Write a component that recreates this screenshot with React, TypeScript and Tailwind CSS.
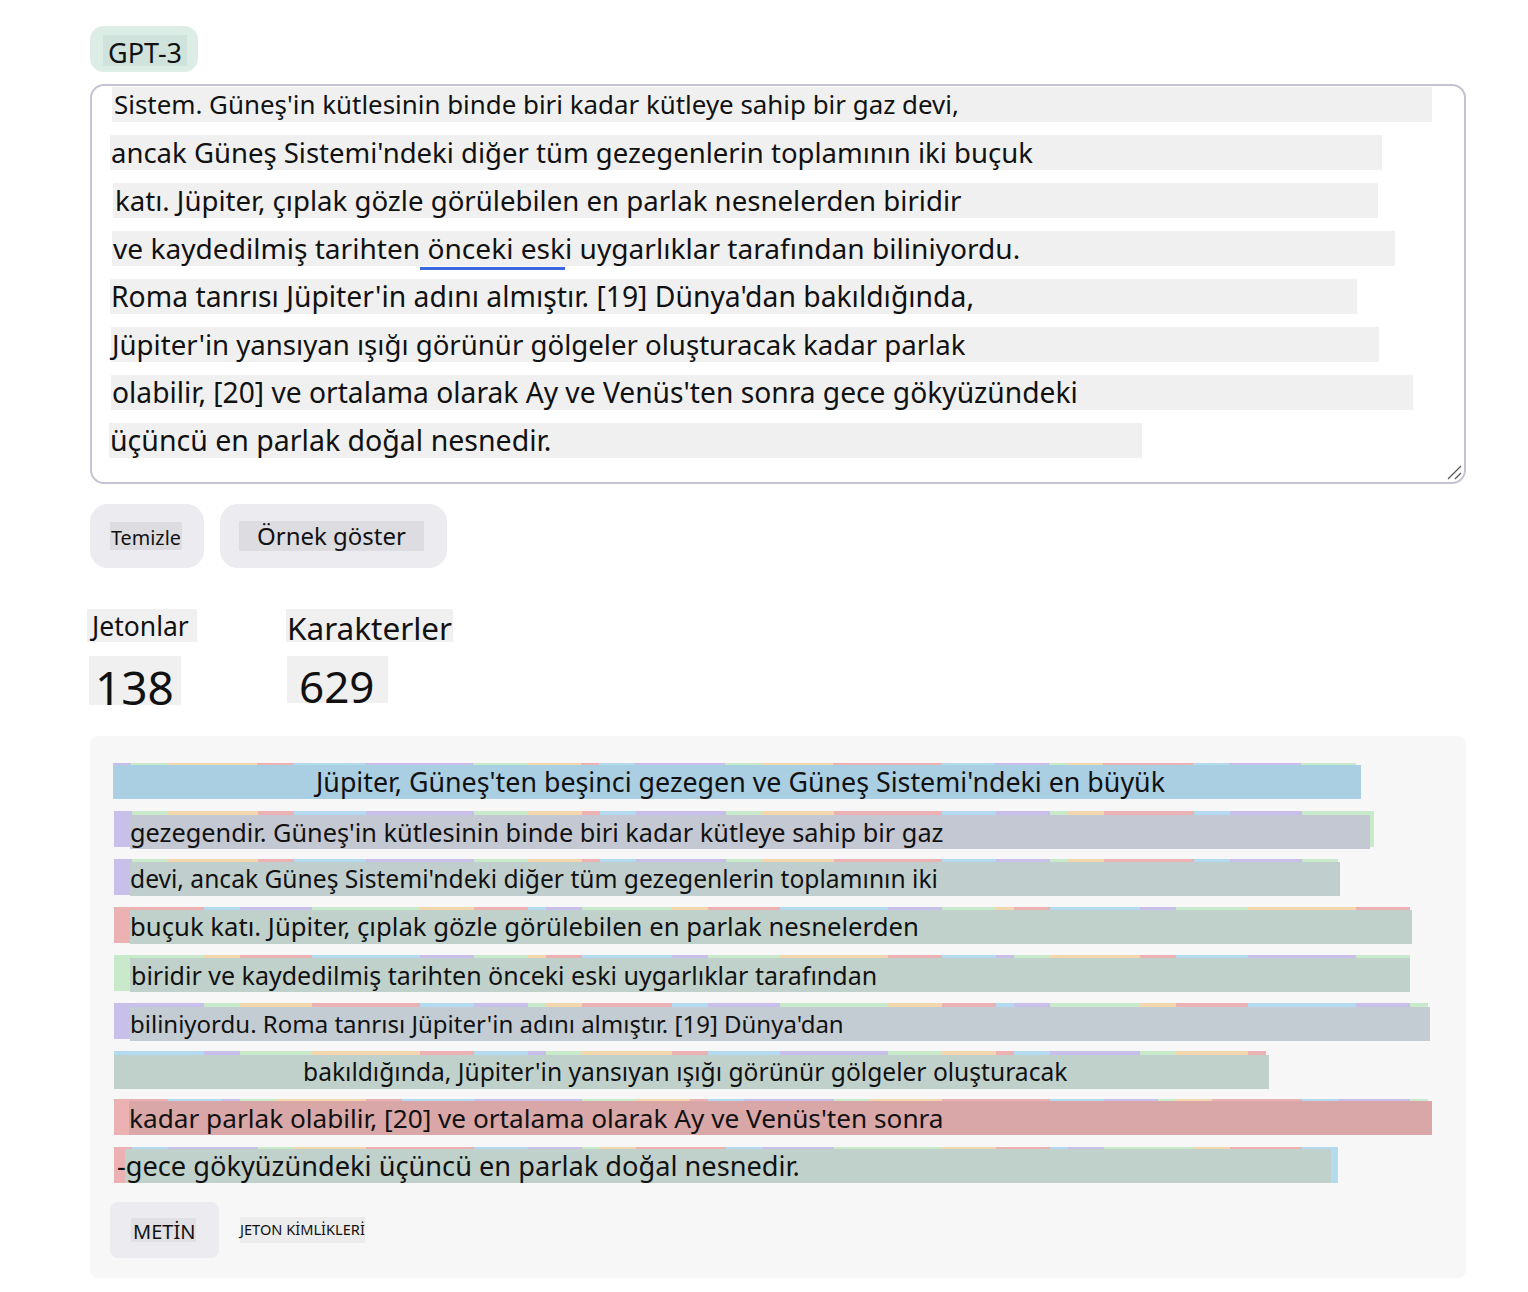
import React from "react";

const COLORS = ["#c8c0ea", "#c8eacb", "#f1d6ae", "#ecb2b3", "#b3daee"];

function makeSegs(start: number, end: number, first: number, seed: number) {
  const out: { w: number; c: string }[] = [];
  let x = start;
  let i = first;
  let s = seed;
  const choices = [18, 36, 54, 54, 72, 108, 90, 36];
  while (x < end) {
    s = (s * 9301 + 49297) % 233280;
    const w = choices[s % choices.length];
    const ww = Math.min(w, end - x);
    out.push({ w: ww, c: COLORS[i % 5] });
    x += ww;
    i++;
  }
  return out;
}

type TokLine = {
  segStart: number;
  segEnd: number;
  first: number;
  seed: number;
  ovLeft: number;
  ovRight: number;
  ovTop: number;
  bg: string;
  text: string;
  textLeft: number;
  size: number;
};

const PANEL_X = 90;

const tokLines: TokLine[] = [
  { segStart: 113, segEnd: 1356, first: 0, seed: 3, ovLeft: 113, ovRight: 1361, ovTop: 2, bg: "#aacee2", text: "Jüpiter, Güneş'ten beşinci gezegen ve Güneş Sistemi'ndeki en büyük", textLeft: 316, size: 26.8 },
  { segStart: 114, segEnd: 1374, first: 0, seed: 11, ovLeft: 130, ovRight: 1370, ovTop: 4, bg: "#c4c8d2", text: "gezegendir. Güneş'in kütlesinin binde biri kadar kütleye sahip bir gaz", textLeft: 130, size: 25.3 },
  { segStart: 114, segEnd: 1338, first: 0, seed: 27, ovLeft: 130, ovRight: 1340, ovTop: 3, bg: "#c0cfcd", text: "devi, ancak Güneş Sistemi'ndeki diğer tüm gezegenlerin toplamının iki", textLeft: 130, size: 24.6 },
  { segStart: 114, segEnd: 1410, first: 3, seed: 41, ovLeft: 130, ovRight: 1412, ovTop: 3, bg: "#c0d1cc", text: "buçuk katı. Jüpiter, çıplak gözle görülebilen en parlak nesnelerden", textLeft: 130, size: 25.7 },
  { segStart: 114, segEnd: 1410, first: 1, seed: 57, ovLeft: 130, ovRight: 1410, ovTop: 3, bg: "#c0d1cc", text: "biridir ve kaydedilmiş tarihten önceki eski uygarlıklar tarafından", textLeft: 131, size: 25 },
  { segStart: 114, segEnd: 1428, first: 0, seed: 73, ovLeft: 130, ovRight: 1430, ovTop: 4, bg: "#c2ccd2", text: "biliniyordu. Roma tanrısı Jüpiter'in adını almıştır. [19] Dünya'dan", textLeft: 130, size: 24 },
  { segStart: 114, segEnd: 1266, first: 4, seed: 89, ovLeft: 114, ovRight: 1269, ovTop: 4, bg: "#c0d1cc", text: "bakıldığında, Jüpiter'in yansıyan ışığı görünür gölgeler oluşturacak", textLeft: 303, size: 24.6 },
  { segStart: 114, segEnd: 1428, first: 3, seed: 101, ovLeft: 129, ovRight: 1432, ovTop: 2, bg: "#d9a7a7", text: "kadar parlak olabilir, [20] ve ortalama olarak Ay ve Venüs'ten sonra", textLeft: 129, size: 26.2 },
  { segStart: 114, segEnd: 1338, first: 3, seed: 131, ovLeft: 125, ovRight: 1331, ovTop: 2, bg: "#c0d1cc", text: "-gece gökyüzündeki üçüncü en parlak doğal nesnedir.", textLeft: 117, size: 27.2 },
];

const taLines = [
  { ml: 112, right: 1432, textPad: 2, size: 25.9, text: "Sistem. Güneş'in kütlesinin binde biri kadar kütleye sahip bir gaz devi," },
  { ml: 110, right: 1382, textPad: 1, size: 27.5, text: "ancak Güneş Sistemi'ndeki diğer tüm gezegenlerin toplamının iki buçuk" },
  { ml: 113, right: 1378, textPad: 2, size: 27.6, text: "katı. Jüpiter, çıplak gözle görülebilen en parlak nesnelerden biridir" },
  { ml: 112, right: 1395, textPad: 1, size: 28.1, text: "" },
  { ml: 110, right: 1357, textPad: 1, size: 28.3, text: "Roma tanrısı Jüpiter'in adını almıştır. [19] Dünya'dan bakıldığında," },
  { ml: 111, right: 1379, textPad: 1, size: 27.6, text: "Jüpiter'in yansıyan ışığı görünür gölgeler oluşturacak kadar parlak" },
  { ml: 111, right: 1413, textPad: 1, size: 28.2, text: "olabilir, [20] ve ortalama olarak Ay ve Venüs'ten sonra gece gökyüzündeki" },
  { ml: 109, right: 1142, textPad: 1, size: 28.5, text: "üçüncü en parlak doğal nesnedir." },
];

function TokenRow({ l }: { l: TokLine }) {
  const segs = makeSegs(l.segStart, l.segEnd, l.first, l.seed);
  const pad = l.textLeft - l.ovLeft;
  return (
    <div className="relative h-[36px]">
      <div className="flex h-[36px]" style={{ marginLeft: l.segStart - PANEL_X - 23 }}>
        {segs.map((s, i) => (
          <div key={i} className="h-full shrink-0" style={{ width: s.w, background: s.c }} />
        ))}
      </div>
      <div
        className="absolute h-[34px] leading-[34px] whitespace-nowrap text-[#111]"
        style={{
          left: l.ovLeft - PANEL_X - 23,
          width: l.ovRight - l.ovLeft,
          top: l.ovTop,
          background: l.bg,
          fontSize: l.size,
          paddingLeft: Math.max(0, pad),
          textIndent: Math.min(0, pad),
        }}
      >
        {l.text}
      </div>
    </div>
  );
}

export default function App() {
  return (
    <div className="min-h-[1292px] bg-white font-['Noto_Sans',sans-serif] text-[#111] pl-[90px] pt-[26px]">
      <div className="w-[1376px]">
        {/* Model tab */}
        <div className="flex">
          <div className="h-[46px] w-[108px] rounded-[14px] bg-[#dcede6] pl-[13px] pt-[9px]">
            <div className="h-[31px] w-[84px] bg-[#cfe3dc] pl-[5px] text-[27px] leading-[35px] whitespace-nowrap">GPT-3</div>
          </div>
        </div>

        {/* Textarea */}
        <div className="relative mt-[12px] h-[400px] rounded-[14px] border-2 border-[#c5c3d3] pt-[1px]">
          <div className="flex flex-col gap-[13px]">
            {taLines.map((l, i) => (
              <div
                key={i}
                className="h-[35px] bg-[#f0f0f0] leading-[35px] whitespace-nowrap"
                style={{ marginLeft: l.ml - 92, width: l.right - l.ml, paddingLeft: l.textPad, fontSize: l.size }}
              >
                {i === 3 ? (
                  <>
                    ve kaydedilmiş tarihten
                    <span className="border-b-[3px] border-[#3a68e0]"> önceki esk</span>i uygarlıklar tarafından biliniyordu.
                  </>
                ) : (
                  l.text
                )}
              </div>
            ))}
          </div>
          <svg className="absolute bottom-[1px] right-[1px]" width="18" height="18" viewBox="0 0 18 18">
            <line x1="3" y1="16" x2="16" y2="3" stroke="#555" strokeWidth="1.3" />
            <line x1="10" y1="16" x2="16" y2="10" stroke="#555" strokeWidth="1.3" />
          </svg>
        </div>

        {/* Buttons */}
        <div className="mt-[20px] flex gap-[16px]">
          <div className="flex h-[64px] w-[114px] items-center rounded-[18px] bg-[#ebebf0] pl-[20px]">
            <div className="h-[28px] w-[72px] bg-[#dcdce1] pl-[1px] text-[19.8px] leading-[32px] whitespace-nowrap">Temizle</div>
          </div>
          <div className="flex h-[64px] w-[227px] items-center rounded-[18px] bg-[#ebebf0] pl-[19px]">
            <div className="h-[30px] w-[185px] bg-[#dcdce1] pl-[18px] text-[24px] leading-[29px] whitespace-nowrap">Örnek göster</div>
          </div>
        </div>

        {/* Stats */}
        <div className="mt-[41px] flex">
          <div className="w-[196px] -ml-[3px]">
            <div className="h-[33px] w-[110px] bg-[#f0f0f0] pl-[5px] text-[26.5px] leading-[34px] whitespace-nowrap">Jetonlar</div>
            <div className="mt-[14px] ml-[2px] h-[49px] w-[92px] bg-[#f0f0f0] pl-[6px] text-[46px] leading-[62px]">138</div>
          </div>
          <div className="ml-[3px]">
            <div className="h-[33px] w-[167px] bg-[#f0f0f0] pl-[1px] text-[31.5px] leading-[37px] whitespace-nowrap">Karakterler</div>
            <div className="mt-[14px] ml-[1px] h-[47px] w-[101px] bg-[#f0f0f0] pl-[12px] text-[44px] leading-[60px]">629</div>
          </div>
        </div>

        {/* Token panel */}
        <div className="mt-[31px] rounded-[8px] bg-[#f7f7f7] pl-[23px] pt-[27px] pb-[20px]">
          <div className="flex flex-col gap-[12px]">
            {tokLines.map((l, i) => (
              <TokenRow key={i} l={l} />
            ))}
          </div>
          <div className="mt-[19px] -ml-[3px] flex items-center">
            <div className="flex h-[56px] w-[109px] items-center rounded-[8px] bg-[#ebebf0] pl-[21px]">
              <div className="h-[24px] w-[65px] bg-[#e1e1e5] pl-[2px] text-[20px] leading-[28px] whitespace-nowrap">METİN</div>
            </div>
            <div className="ml-[21px] h-[26px] w-[125px] bg-[#ececec] text-[14.6px] leading-[25px] whitespace-nowrap">
              JETON KİMLİKLERİ
            </div>
          </div>
        </div>
      </div>
    </div>
  );
}
